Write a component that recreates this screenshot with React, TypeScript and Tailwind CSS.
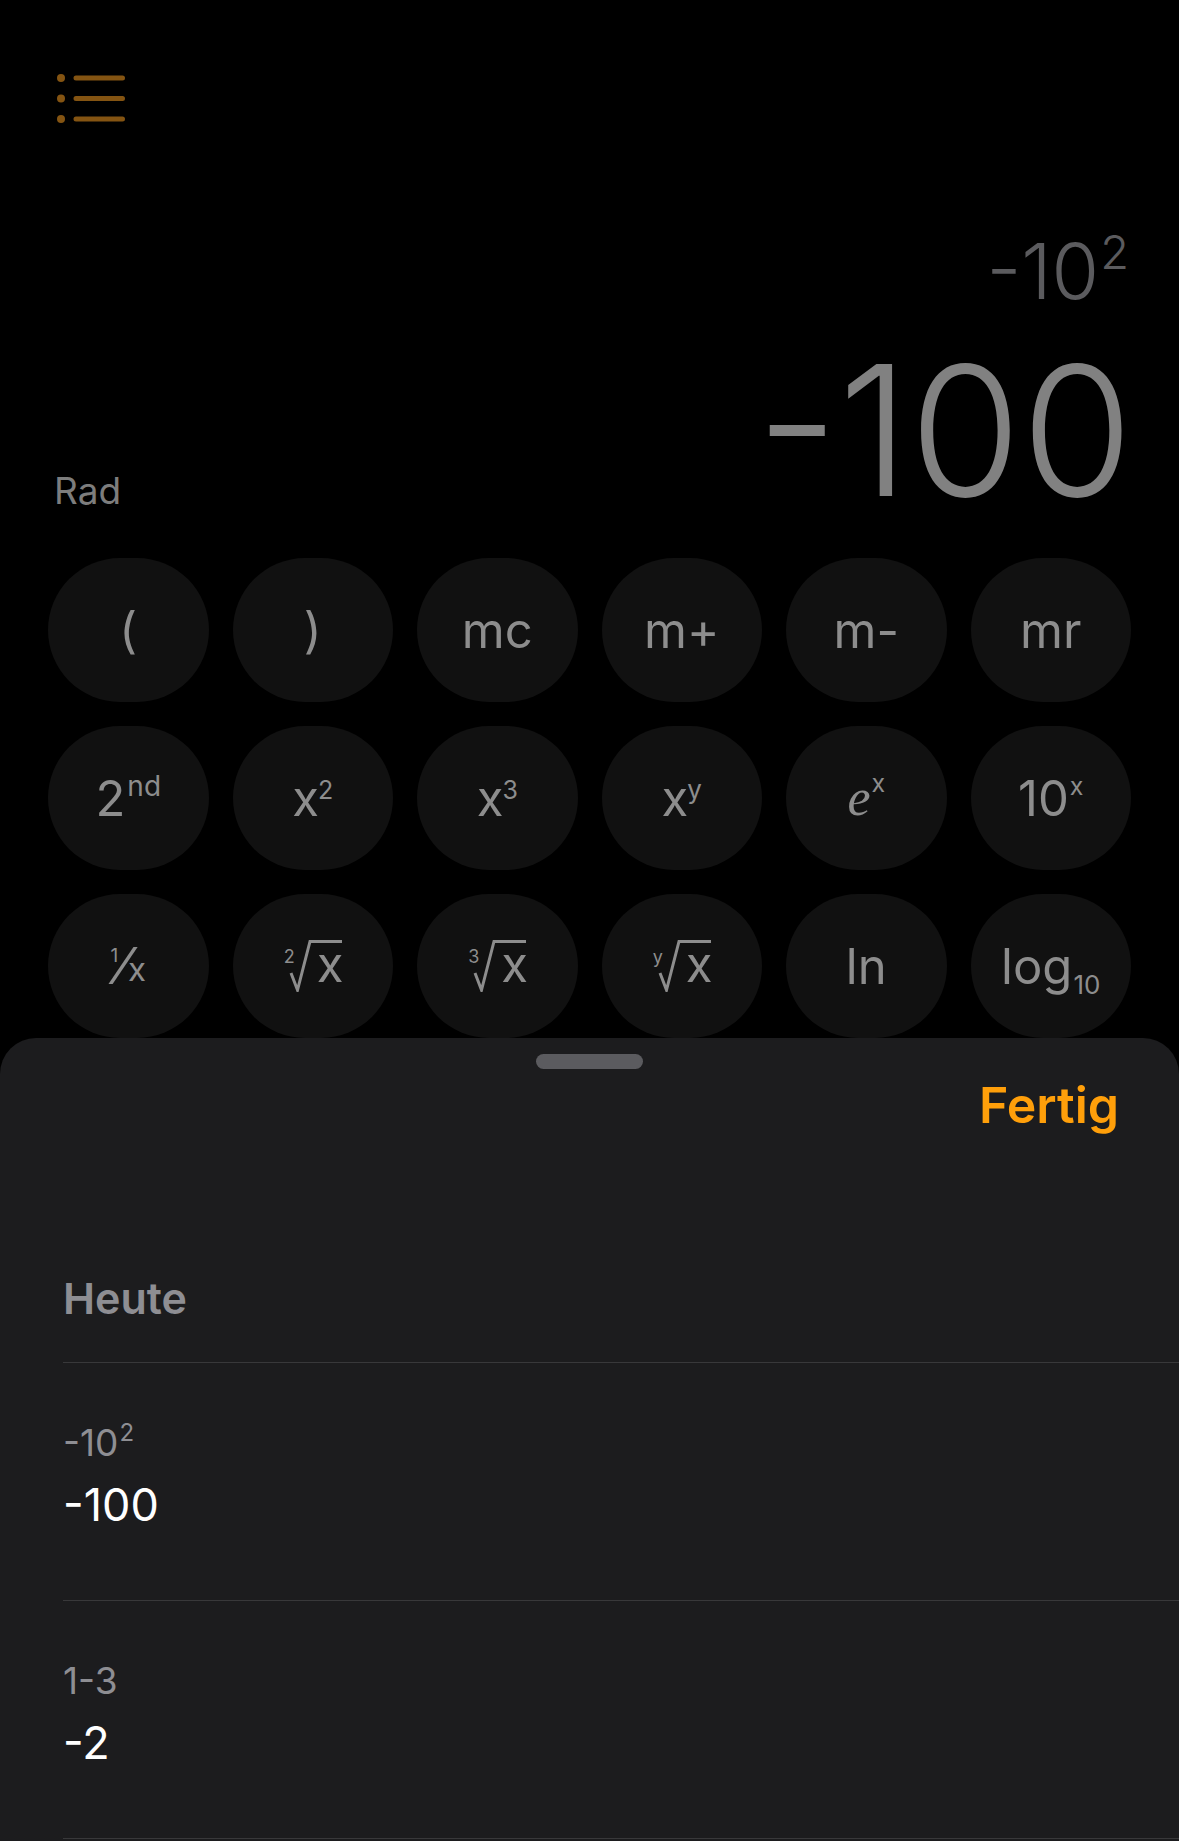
import { ReactNode } from 'react';

const LABEL = 'text-[#8d8d8d]';

// Basis mit hochgestelltem Zusatz
const Sup = ({ base, sup, supClass = 'text-[24px]' }: { base: ReactNode; sup: string; supClass?: string }) => (
  <span className="inline-flex items-start leading-none">
    <span>{base}</span>
    <span className={`${supClass} leading-none`}>{sup}</span>
  </span>
);

// Wurzelzeichen mit Index
const Root = ({ index }: { index: string }) => (
  <span className="relative block w-[58px] h-[52px]">
    <svg className="absolute inset-0" width="58" height="52" viewBox="0 0 58 52" fill="none">
      <path d="M7 33 L13.5 50 L26 1.5 L58 1.5" stroke="#8d8d8d" strokeWidth="3" strokeLinejoin="miter" />
    </svg>
    <span className="absolute left-0 top-[8px] text-[18px] leading-none">{index}</span>
    <span className="absolute left-[33px] top-0 text-[49px] leading-none">x</span>
  </span>
);

const Reciprocal = () => (
  <span className="inline-flex items-stretch h-[40px] leading-none">
    <span className="self-start text-[19px] leading-none">1</span>
    <span className="self-center text-[50px] leading-none">⁄</span>
    <span className="self-end text-[33px] leading-none">x</span>
  </span>
);

const Log10 = () => (
  <span className="inline-flex items-end leading-none">
    <span>log</span>
    <span className="text-[26px] leading-none mb-[-7px] ml-[1px]">10</span>
  </span>
);

const rows: ReactNode[][] = [
  ['(', ')', 'mc', 'm+', 'm-', 'mr'],
  [
    <Sup base="2" sup="nd" supClass="text-[28px] -mt-[2px] ml-[2px]" />,
    <Sup base="x" sup="2" supClass="text-[25px] mt-[4px] -ml-[1px]" />,
    <Sup base="x" sup="3" supClass="text-[25px] mt-[4px] -ml-[1px]" />,
    <Sup base="x" sup="y" supClass="text-[26px] mt-[3px] -ml-[1px]" />,
    <Sup base={<span className="font-['Liberation_Serif',serif] italic text-[52px]">e</span>} sup="x" supClass="text-[25px] -mt-[1px] ml-[1px]" />,
    <Sup base="10" sup="x" supClass="text-[25px] ml-[1px]" />,
  ],
  [<Reciprocal />, <Root index="2" />, <Root index="3" />, <Root index="y" />, 'ln', <Log10 />],
];

const MenuIcon = () => (
  <svg width="70" height="50" viewBox="0 0 70 50" fill="none">
    <circle cx="4" cy="4" r="4" fill="#845412" />
    <circle cx="4" cy="24.5" r="4" fill="#845412" />
    <circle cx="4" cy="45" r="4" fill="#845412" />
    <path d="M19 4 H65.5 M19 24.5 H65.5 M19 45 H65.5" stroke="#845412" strokeWidth="5" strokeLinecap="round" />
  </svg>
);

const HistoryRow = ({ expr, result }: { expr: ReactNode; result: string }) => (
  <div className="ml-[63px] border-t border-[#38383a]">
    <div className="pt-[61px] pb-[73px]">
      <div className="text-[37px] leading-none text-[#8e8e93]">{expr}</div>
      <div className="mt-[21px] text-[45px] leading-none text-white">{result}</div>
    </div>
  </div>
);

export default function App() {
  return (
    <div className="relative w-[1179px] h-[1841px] overflow-hidden bg-black font-['Inter',sans-serif]">
      {/* Rechner im Hintergrund */}
      <div className="pt-[74px] pl-[57px]">
        <MenuIcon />
      </div>

      <div className="mt-[109px] flex justify-end pr-[50px] text-[#5b5b5e]">
        <span className="inline-flex items-start leading-none font-light">
          <span className="text-[77px]">-10</span>
          <span className="text-[47px] -mt-[5px] ml-[1px]">2</span>
        </span>
      </div>

      <div className="mt-[30px] flex items-end justify-between pl-[54px] pr-[46px]">
        <span className="mb-[12px] text-[37px] leading-none text-[#7d7d7d]">Rad</span>
        <span className="text-[181px] leading-none font-light text-[#818181]">-100</span>
      </div>

      <div className={`mt-[37px] grid grid-cols-6 gap-x-[24px] gap-y-[24px] px-[48px] ${LABEL}`}>
        {rows.flat().map((label, i) => (
          <div key={i} className="flex h-[144px] items-center justify-center rounded-full bg-[#111111] text-[49px] leading-none">
            {label}
          </div>
        ))}
      </div>

      {/* Verlauf als Sheet */}
      <div className="absolute left-0 right-0 top-[1038px] bottom-0 rounded-t-[36px] bg-[#1c1c1e]">
        <div className="mx-auto mt-[16px] h-[15px] w-[107px] rounded-full bg-[#5b5b5f]" />
        <div className="mt-[11px] flex justify-end pr-[60px]">
          <span className="text-[50px] leading-none font-semibold text-[#ff9f0a]">Fertig</span>
        </div>
        <div className="mt-[147px] pl-[63px] text-[43px] leading-none font-semibold text-[#8e8e93]">Heute</div>
        <div className="mt-[42px]">
          <HistoryRow
            expr={
              <span className="inline-flex items-start">
                <span>-10</span>
                <span className="text-[24px] leading-none -mt-[3px] ml-[1px]">2</span>
              </span>
            }
            result="-100"
          />
          <HistoryRow expr="1-3" result="-2" />
          <div className="ml-[63px] border-t border-[#38383a]" />
        </div>
      </div>
    </div>
  );
}
